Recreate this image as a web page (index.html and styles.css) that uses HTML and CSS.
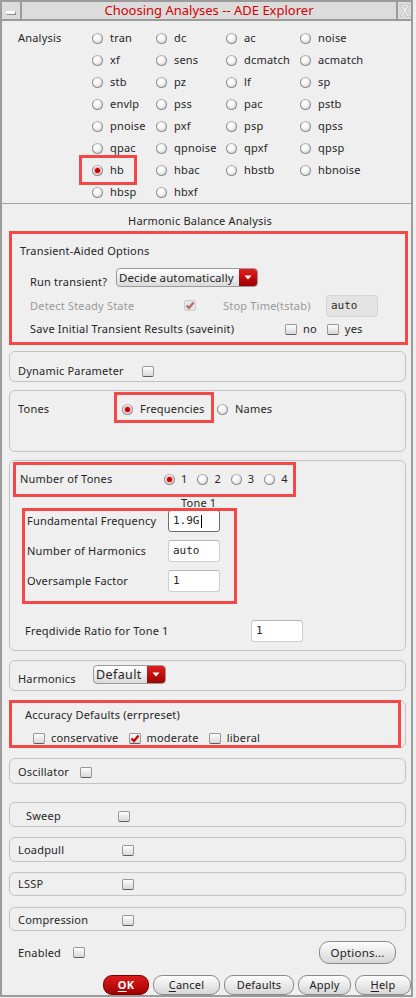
FILE: index.html
```html
<!DOCTYPE html>
<html>
<head>
<meta charset="utf-8">
<title>Choosing Analyses -- ADE Explorer</title>
<link rel="stylesheet" href="styles.css">
</head>
<body>
<div class="window">
  <div class="titlebar">
    <div class="tb-min"><span class="min-bar"></span></div>
    <div class="tb-title">Choosing Analyses -- ADE Explorer</div>
    <div class="tb-close">
      <svg width="12" height="15" viewBox="0 0 12 15"><path d="M1 1.5 L4 1.5 L6 5 L8 1.5 L11 1.5 L7.5 7.5 L11 13.5 L8 13.5 L6 10 L4 13.5 L1 13.5 L4.5 7.5 Z" fill="#e9e9e9" stroke="#b4b4b4" stroke-width="1" stroke-dasharray="1.5 1"/></svg>
    </div>
  </div>

  <div class="analysis">
    <div class="an-label">Analysis</div>
    <div class="an-grid">
      <div class="opt"><span class="radio"></span>tran</div>
      <div class="opt"><span class="radio"></span>dc</div>
      <div class="opt"><span class="radio"></span>ac</div>
      <div class="opt"><span class="radio"></span>noise</div>
      <div class="opt"><span class="radio"></span>xf</div>
      <div class="opt"><span class="radio"></span>sens</div>
      <div class="opt"><span class="radio"></span>dcmatch</div>
      <div class="opt"><span class="radio"></span>acmatch</div>
      <div class="opt"><span class="radio"></span>stb</div>
      <div class="opt"><span class="radio"></span>pz</div>
      <div class="opt"><span class="radio"></span>lf</div>
      <div class="opt"><span class="radio"></span>sp</div>
      <div class="opt"><span class="radio"></span>envlp</div>
      <div class="opt"><span class="radio"></span>pss</div>
      <div class="opt"><span class="radio"></span>pac</div>
      <div class="opt"><span class="radio"></span>pstb</div>
      <div class="opt"><span class="radio"></span>pnoise</div>
      <div class="opt"><span class="radio"></span>pxf</div>
      <div class="opt"><span class="radio"></span>psp</div>
      <div class="opt"><span class="radio"></span>qpss</div>
      <div class="opt"><span class="radio"></span>qpac</div>
      <div class="opt"><span class="radio"></span>qpnoise</div>
      <div class="opt"><span class="radio"></span>qpxf</div>
      <div class="opt"><span class="radio"></span>qpsp</div>
      <div class="opt hl hl-hb"><span class="radio on"></span>hb</div>
      <div class="opt"><span class="radio"></span>hbac</div>
      <div class="opt"><span class="radio"></span>hbstb</div>
      <div class="opt"><span class="radio"></span>hbnoise</div>
      <div class="opt"><span class="radio"></span>hbsp</div>
      <div class="opt"><span class="radio"></span>hbxf</div>
    </div>
  </div>

  <div class="sep"></div>

  <div class="panel">
    <div class="panel-title">Harmonic Balance Analysis</div>

    <section class="trans">
      <div class="trans-title">Transient-Aided Options</div>
      <div class="run-row">
        <span class="run-label">Run transient?</span>
        <div class="combo combo-run">
          <span class="combo-text">Decide automatically</span>
          <span class="combo-arrow"><svg width="8" height="5" viewBox="0 0 8 5"><path d="M0.5 0.5 H7.5 L4 4.5 Z" fill="#fff"/></svg></span>
        </div>
      </div>
      <div class="detect-row">
        <span class="dis detect-label">Detect Steady State</span>
        <span class="check check-dis"><svg width="10" height="9" viewBox="0 0 10 9"><path d="M1.5 4.5 L4 7 L8.5 1.5" fill="none" stroke="#b66a6a" stroke-width="2.2"/></svg></span>
        <span class="dis stop-label">Stop Time(tstab)</span>
        <span class="input input-dis">auto</span>
      </div>
      <div class="save-row">
        <span class="save-label">Save Initial Transient Results (saveinit)</span>
        <span class="opt"><span class="check"></span>no</span>
        <span class="opt opt-yes"><span class="check"></span>yes</span>
      </div>
    </section>

    <section class="group dyn">
      <div class="gline"><span class="dyn-label">Dynamic Parameter</span><span class="check"></span></div>
    </section>

    <section class="group tones">
      <div class="gline">
        <span class="tones-label">Tones</span>
        <span class="opt hl hl-freq"><span class="radio on"></span>Frequencies</span>
        <span class="opt opt-names"><span class="radio"></span>Names</span>
      </div>
    </section>

    <section class="group ntones">
      <div class="gline nt-row hl hl-nt">
        <span class="nt-label">Number of Tones</span>
        <span class="opt nt-opt"><span class="radio on"></span>1</span>
        <span class="opt nt-opt"><span class="radio"></span>2</span>
        <span class="opt nt-opt"><span class="radio"></span>3</span>
        <span class="opt nt-opt"><span class="radio"></span>4</span>
      </div>
      <div class="tone-title">Tone 1</div>
      <div class="tone-fields hl hl-fields">
        <div class="frow"><span class="f-label">Fundamental Frequency</span><span class="input input-focus">1.9G<span class="caret"></span></span></div>
        <div class="frow"><span class="f-label">Number of Harmonics</span><span class="input">auto</span></div>
        <div class="frow"><span class="f-label">Oversample Factor</span><span class="input">1</span></div>
      </div>
      <div class="frow fd-row"><span class="fd-label">Freqdivide Ratio for Tone 1</span><span class="input">1</span></div>
    </section>

    <section class="group harm">
      <span class="harm-label">Harmonics</span>
      <div class="combo combo-harm">
        <span class="combo-text combo-text-lg">Default</span>
        <span class="combo-arrow"><svg width="8" height="5" viewBox="0 0 8 5"><path d="M0.5 0.5 H7.5 L4 4.5 Z" fill="#fff"/></svg></span>
      </div>
    </section>

    <section class="group acc hl hl-acc">
      <div class="acc-title">Accuracy Defaults (errpreset)</div>
      <div class="gline acc-row">
        <span class="opt"><span class="check"></span>conservative</span>
        <span class="opt"><span class="check"><svg width="10" height="9" viewBox="0 0 10 9"><path d="M1.5 4.5 L4 7 L8.5 1.5" fill="none" stroke="#c40000" stroke-width="2.2"/></svg></span>moderate</span>
        <span class="opt"><span class="check"></span>liberal</span>
      </div>
    </section>

    <section class="group osc">
      <div class="gline"><span class="osc-label">Oscillator</span><span class="check"></span></div>
    </section>

    <section class="group sweep">
      <div class="gline"><span class="sweep-label">Sweep</span><span class="check"></span></div>
    </section>

    <section class="group lp">
      <div class="gline"><span class="w-label">Loadpull</span><span class="check"></span></div>
    </section>

    <section class="group lssp">
      <div class="gline"><span class="w-label">LSSP</span><span class="check"></span></div>
    </section>

    <section class="group comp">
      <div class="gline"><span class="w-label">Compression</span><span class="check"></span></div>
    </section>

    <div class="enabled-row">
      <div class="gline"><span class="en-label">Enabled</span><span class="check"></span></div>
      <div class="btn btn-options">Options...</div>
    </div>

    <div class="button-row">
      <div class="btn btn-ok"><u>O</u>K</div>
      <div class="btn btn-cancel"><u>C</u>ancel</div>
      <div class="btn btn-defaults">Defaults</div>
      <div class="btn btn-apply">Apply</div>
      <div class="btn btn-help"><u>H</u>elp</div>
    </div>
  </div>
</div>
</body>
</html>
```

FILE: styles.css
```css
* { box-sizing: border-box; margin: 0; padding: 0; }
html, body { width: 416px; height: 998px; overflow: hidden; }
body {
  background: #efefef;
  font-family: "Noto Sans", "DejaVu Sans", sans-serif;
  font-size: 11px;
  line-height: 16px;
  letter-spacing: 0.2px;
  color: #262626;
}

.window {
  width: 413px;
  height: 997px;
  border: 2px solid #9b9b9b;
  background: #efefef;
  display: flex;
  flex-direction: column;
}

/* title bar */
.titlebar {
  display: flex;
  gap: 2px;
  height: 19px;
  padding-bottom: 2px;
  background: #9b9b9b;
  flex: none;
}
.tb-min {
  width: 18px;
  background: #dcdcdc;
  display: flex;
  justify-content: center;
  padding-top: 9px;
}
.min-bar {
  width: 10px;
  height: 4px;
  background: #f7f7f7;
  border: 1px solid #8e8e8e;
  border-top-color: #ffffff;
  border-left-color: #ffffff;
}
.tb-title {
  flex: 1;
  background: #dcdcdc;
  color: #d30000;
  font-size: 13px;
  line-height: 17px;
  letter-spacing: 0;
  text-align: center;
}
.tb-close {
  width: 13px;
  background: #dcdcdc;
  display: flex;
  align-items: center;
  justify-content: center;
}

/* common widgets */
.opt { display: flex; align-items: center; gap: 7px; white-space: nowrap; }
.radio {
  width: 11px;
  height: 11px;
  border-radius: 50%;
  border: 1px solid #8d8d8d;
  border-top-color: #b0b0b0;
  background: radial-gradient(circle at 40% 35%, #ffffff 0, #f6f6f6 40%, #c8c8c8 100%);
  flex: none;
  position: relative;
}
.radio.on::after {
  content: "";
  position: absolute;
  left: 2px;
  top: 2px;
  width: 5px;
  height: 5px;
  border-radius: 50%;
  background: #c80000;
  box-shadow: 0 0 0 1px #e9a6a6;
}
.check {
  width: 12px;
  height: 11px;
  border: 1px solid #979797;
  border-bottom-color: #5c5c5c;
  border-radius: 2px;
  background: linear-gradient(#fdfdfd, #d8d8d8);
  flex: none;
  position: relative;
}
.check svg { position: absolute; left: 0; top: 0; }
.check-dis { background: #e5e5e5; border-color: #cdcdcd; }
.dis { color: #9a9a9a; }

.combo {
  display: flex;
  height: 19px;
  border: 1px solid #9a9a9a;
  border-radius: 4px;
  background: linear-gradient(#ffffff, #dadada);
  overflow: hidden;
  flex: none;
}
.combo-text { flex: 1; padding-left: 2px; font-size: 11.5px; line-height: 17px; white-space: nowrap; letter-spacing: 0.1px; }
.combo-text-lg { font-size: 12.5px; letter-spacing: 0.4px; }
.combo-arrow {
  width: 18px;
  background: linear-gradient(#e31e1e, #9c0000);
  display: flex;
  align-items: center;
  justify-content: center;
}

.input {
  width: 52px;
  height: 22px;
  border: 1px solid #cfcfcf;
  border-top-color: #b5b5b5;
  border-radius: 3px;
  background: #ffffff;
  font-family: "DejaVu Sans Mono", "Liberation Mono", monospace;
  font-size: 11px;
  line-height: 20px;
  letter-spacing: 0;
  padding-left: 4px;
  flex: none;
  display: flex;
  align-items: center;
}
.input-dis { background: #e3e3e3; border-color: #d6d6d6; color: #2a2a2a; }
.input-focus { border-color: #6e6e6e; }
.caret { width: 1px; height: 13px; background: #000; margin-left: 1px; }

.btn {
  height: 20px;
  border: 1px solid #8a8a8a;
  border-radius: 9px;
  background: linear-gradient(#fdfdfd, #d6d6d6);
  display: flex;
  align-items: center;
  justify-content: center;
  font-size: 11px;
  color: #222;
  flex: none;
}
.btn u { text-underline-offset: 2px; }

/* annotations */
.hl { position: relative; }
.hl::after {
  content: "";
  position: absolute;
  border: 3px solid #f44848;
  pointer-events: none;
}
.hl-hb::after { inset: -4px 19px -4px -13px; }
.hl-freq::after { inset: -9px -7px -6px -8px; }
.hl-nt::after { inset: -9px 109px -10px 3px; }
.hl-fields::after { inset: -2px 0 0 0; }
.hl-acc::after { inset: -1px 4px -1px -1px; border-radius: 0; }

/* analysis */
.analysis {
  display: flex;
  padding: 6px 0 0 16px;
  height: 182px;
  flex: none;
}
.an-label { width: 74px; line-height: 22px; }
.an-grid {
  display: grid;
  grid-template-columns: 64px 70px 74px 90px;
  grid-auto-rows: 22px;
}
.sep { height: 1px; background: #a2a2a2; flex: none; }

/* panel */
.panel { display: flex; flex-direction: column; flex: 1; }
.panel-title { padding: 9px 13px 0 0; text-align: center; }

.trans {
  margin: 2px 3px 0 7px;
  height: 114px;
  border: 3px solid #f44848;
  padding: 9px 0 0 8px;
}
.run-row { display: flex; align-items: flex-start; margin-top: 9px; padding-left: 10px; }
.run-label { width: 86px; margin-top: 6px; }
.combo-run { width: 142px; }
.detect-row { display: flex; align-items: center; height: 23px; margin-top: 4px; padding-left: 10px; }
.detect-label { width: 154px; }
.stop-label { width: 103px; margin-left: 27px; }
.save-row { display: flex; align-items: center; height: 16px; margin-top: 4px; padding-left: 10px; }
.save-label { width: 255px; }
.save-row .opt { gap: 6px; }
.opt-yes { margin-left: 10px; }

.group {
  margin: 0 5px 0 7px;
  border: 1px solid #c3c3c3;
  border-radius: 6px;
  flex: none;
}
.gline { display: flex; align-items: center; height: 16px; }

.dyn { margin-top: 6px; height: 31px; padding: 11px 0 0 8px; }
.dyn-label { width: 124px; }

.tones { margin-top: 8px; height: 62px; padding: 10px 0 0 8px; }
.tones-label { width: 104px; }
.hl-freq { width: 85px; }
.opt-names { margin-left: 10px; }

.ntones { margin-top: 8px; height: 191px; padding-top: 10px; }
.nt-row { padding-left: 10px; }
.nt-label { width: 144px; }
.nt-opt { width: 33.4px; gap: 6px; }
.tone-title { margin-top: 8px; line-height: 15px; padding-left: 171px; }
.tone-fields {
  margin-left: 12px;
  width: 215px;
  padding: 0 0 12px 5px;
  display: flex;
  flex-direction: column;
  gap: 8px;
}
.frow { display: flex; align-items: center; height: 22px; }
.f-label { width: 141px; }
.fd-row { margin-top: 16px; padding-left: 15px; }
.fd-label { width: 226px; }

.harm { margin-top: 9px; height: 31px; padding: 4px 0 0 8px; display: flex; align-items: flex-start; }
.harm-label { width: 75px; margin-top: 6px; }
.combo-harm { width: 73px; }

.acc { margin-top: 9px; height: 48px; padding: 6px 0 0 15px; }
.acc-row { margin-top: 7px; padding-left: 8px; gap: 10px; }
.acc-row .opt { gap: 6px; }

.osc { margin-top: 10px; height: 26px; padding: 5px 0 0 8px; }
.osc-label { width: 62px; }
.sweep { margin-top: 18px; height: 25px; padding: 5px 0 0 16px; }
.sweep-label { width: 92px; }
.lp { margin-top: 10px; height: 25px; padding: 4px 0 0 8px; }
.lssp { margin-top: 10px; height: 24px; padding: 3px 0 0 8px; }
.comp { margin-top: 11px; height: 24px; padding: 4px 0 0 8px; }
.w-label { width: 104px; }

.enabled-row {
  margin-top: 10px;
  height: 23px;
  padding: 0 15px 0 16px;
  display: flex;
  align-items: center;
  justify-content: space-between;
  flex: none;
}
.en-label { width: 55px; }
.btn-options { width: 77px; height: 23px; border-radius: 10px; font-size: 11.5px; }

.button-row {
  margin-top: 11px;
  height: 20px;
  display: flex;
  justify-content: flex-end;
  gap: 4px;
  padding-right: 0;
  flex: none;
}
.btn-ok {
  width: 46px;
  background: linear-gradient(#dc1c1c, #a30000);
  border-color: #7c0000;
  color: #ffffff;
  font-weight: bold;
}
.btn-cancel { width: 67px; }
.btn-defaults { width: 70px; }
.btn-apply { width: 53px; }
.btn-help { width: 56px; }
```
